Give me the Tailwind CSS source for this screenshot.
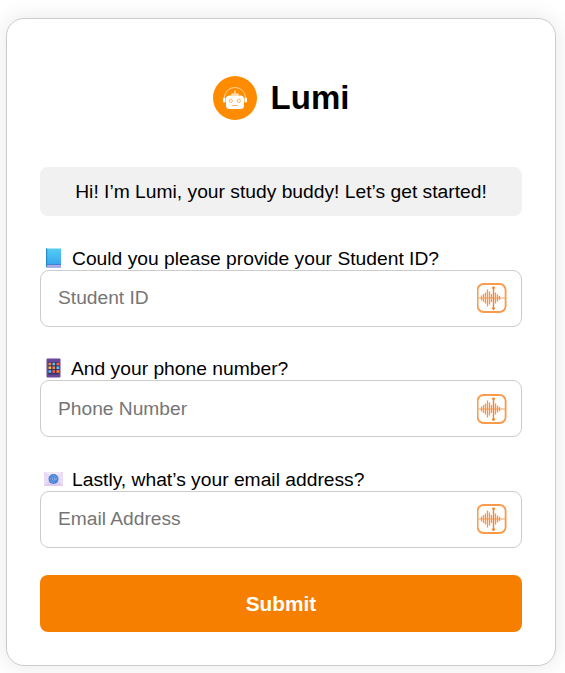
<!DOCTYPE html>
<html lang="en">
<head>
<meta charset="utf-8">
<title>Lumi</title>
<script src="https://cdn.jsdelivr.net/npm/@tailwindcss/browser@4"></script>
</head>
<body class="h-screen bg-white pt-[18px] pl-[6px] font-['Liberation_Sans',Arial,sans-serif] text-black overflow-hidden">
<svg class="hidden">
  <symbol id="wave" viewBox="0 0 30 30">
    <rect x=".6" y="1" width="28" height="28" rx="6" fill="none" stroke="#fb9a4b" stroke-width="1.8"/>
    <path d="M1.500 15H28" stroke="#fba05a" stroke-width="1"/>
    <path d="M4.500 12.500v5M6.500 11v8M8.500 9.500v11M10.500 6.500v17M12.500 8.500v13M14.500 11v8M18.500 9.500v11M20.500 11.500v7M22.500 13v4" stroke="#fb923f" stroke-width="1.300"/>
    <path d="M16.500 4.500v21" stroke="#f98026" stroke-width="1.400"/>
    <circle cx="16.500" cy="4.800" r="1.400" fill="#f98026"/><circle cx="16.500" cy="25.500" r="1.400" fill="#f98026"/>
  </symbol>
</svg>
<main class="w-[550px] h-[648px] rounded-[18px] border border-[#ccc] bg-white px-[33px] pt-[57px] shadow-[0_0_22px_rgba(0,0,0,0.1)]">
  <header class="flex h-11 items-center justify-center gap-[14px]">
    <svg class="size-11" viewBox="0 0 44 44">
      <circle cx="22" cy="22" r="22" fill="#ff8c00"/>
      <path d="M11.500 23v-1.500a10.500 10 0 0 1 21 0V23" fill="none" stroke="#ffd5a0" stroke-width="1"/>
      <path d="M21.300 14.500h1.400v3h3v2h-7.400v-2h3z" fill="#ffe0b8"/>
      <rect x="10" y="21.500" width="2.500" height="5" rx="1" fill="#fff"/>
      <rect x="31.500" y="21.500" width="2.500" height="5" rx="1" fill="#fff"/>
      <rect x="13" y="19.500" width="18" height="13.500" rx="3.500" fill="#fff"/>
      <g fill="none" stroke="#ffb35c" stroke-width="1"><circle cx="17.800" cy="24.800" r="1.600"/><circle cx="25.800" cy="24.800" r="1.600"/><path d="M19 29.500h6"/></g>
    </svg>
    <h1 class="pb-[2px] text-[33px] leading-none font-bold">Lumi</h1>
  </header>
  <p class="mt-[47px] flex h-[49px] items-center justify-center rounded-[8px] bg-[#f1f1f1] pt-[2px] text-[19.250px]">Hi! I’m Lumi, your study buddy! Let’s get started!</p>
  <form class="mt-[30px]">
    <div class="h-[110px]">
      <label class="flex h-6 items-center gap-[9px] pl-[6px] text-[19.250px]">
        <svg class="h-5 w-[17px] shrink-0" viewBox="0 0 17 20">
          <defs><linearGradient id="book" x2="0" y2="1"><stop stop-color="#54cdf3"/><stop offset="1" stop-color="#36a5ef"/></linearGradient></defs>
          <path d="M0 .5h15v17H0z" fill="url(#book)"/><path d="M0 .5h1.200v18.500H0z" fill="#268bc4"/>
          <path d="M1 16.500h14v1H1z" fill="#5256bd"/><path d="M1 17.500h14v1H1z" fill="#e5c9f5"/><path d="M.5 18.500H15v1H.5z" fill="#536bd0"/>
        </svg>
        <span class="pt-[2px]">Could you please provide your Student ID?</span>
      </label>
      <div class="flex h-[57px] items-center justify-between rounded-[9px] border border-[#ccc] pr-[14px] pb-px pl-[17px]">
        <input class="w-[380px] pt-px text-[19.200px] placeholder:text-[#757575]" placeholder="Student ID" aria-label="Student ID">
        <svg class="size-[30px]"><use href="#wave"/></svg>
      </div>
    </div>
    <div class="h-[111px]">
      <label class="flex h-6 items-center gap-[9px] pl-[6px] text-[19.250px]">
        <svg class="h-5 w-4 shrink-0" viewBox="0 0 16 20">
          <rect x=".5" y=".5" width="14" height="19" rx="1" fill="#68469b"/><path d="M2 4h11v12.500H2z" fill="#3f3269"/>
          <g stroke-width="2.500"><path d="M2.500 6h2.700M6.500 9.700h2.500M10.500 13.500h2.500" stroke="#ff873d"/><path d="M6.500 6h2.500M10.500 9.700h2.500M2.500 13.500h2.700" stroke="#58c4f4"/><path d="M10.500 6h2.500M6.500 13.500h2.500" stroke="#ff653f"/><path d="M2.500 9.700h2.700" stroke="#ffc247"/></g>
        </svg>
        <span class="pt-[2px]">And your phone number?</span>
      </label>
      <div class="flex h-[57px] items-center justify-between rounded-[9px] border border-[#ccc] pr-[14px] pl-[17px]">
        <input class="w-[380px] pt-px text-[19.200px] placeholder:text-[#757575]" placeholder="Phone Number" aria-label="Phone Number">
        <svg class="size-[30px]"><use href="#wave"/></svg>
      </div>
    </div>
    <div class="h-[108px]">
      <label class="flex h-6 items-center gap-[9px] pl-1 text-[19.250px]">
        <svg class="h-[14px] w-[19px] shrink-0" viewBox="0 0 19 14">
          <path d="M0 0h19v14H0z" fill="#eadcf4"/><path d="M0 14L7 7h5l7 7z" fill="#e1caef"/><path d="M0 0l9.500 8L19 0" fill="#f1e8f6" stroke="#d8c5e7" stroke-width=".5"/>
          <circle cx="9.500" cy="7" r="5" fill="#3b82d6"/><circle cx="9.500" cy="7" r="1.400" fill="none" stroke="#b9c4f0" stroke-width=".6"/><path d="M11 5.500v2.500q2 1 1.800-1.500A3.300 3.300 0 1 0 11 10" fill="none" stroke="#a9b4ea" stroke-width=".6"/>
        </svg>
        <span class="pt-[2px]">Lastly, what’s your email address?</span>
      </label>
      <div class="flex h-[57px] items-center justify-between rounded-[9px] border border-[#ccc] pr-[14px] pb-px pl-[17px]">
        <input class="w-[380px] pt-px text-[19.200px] placeholder:text-[#757575]" placeholder="Email Address" aria-label="Email Address">
        <svg class="size-[30px]"><use href="#wave"/></svg>
      </div>
    </div>
    <button class="block h-[57px] w-full rounded-[8px] bg-[#f77f00] text-[20.800px] font-bold text-white" type="button">Submit</button>
  </form>
</main>
</body>
</html>
